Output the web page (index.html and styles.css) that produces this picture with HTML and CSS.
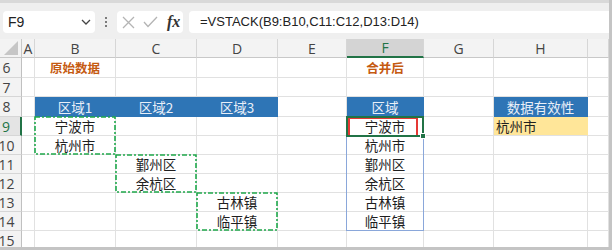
FILE: index.html
```html
<!DOCTYPE html>
<html lang="zh-CN">
<head>
  <meta charset="UTF-8">
  <title>VSTACK 合并区域</title>
  <link rel="stylesheet" href="styles.css">
</head>
<body>
  <div class="window">
    <div class="toolbar">
      <div class="name-box">
        <span>F9</span>
        <svg width="10" height="6" viewBox="0 0 10 6"><polyline points="1,1 5,5 9,1" fill="none" stroke="#444" stroke-width="1.3"/></svg>
      </div>
      <div class="dots"><i></i><i></i><i></i></div>
      <div class="fx-box">
        <svg width="13" height="13" viewBox="0 0 13 13"><path d="M1 1 L12 12 M12 1 L1 12" stroke="#b4b4b4" stroke-width="1.3"/></svg>
        <svg width="15" height="12" viewBox="0 0 15 12"><polyline points="1,6 5,10.5 14,1" fill="none" stroke="#b4b4b4" stroke-width="1.3"/></svg>
        <span class="fx">fx</span>
      </div>
      <div class="formula">=VSTACK(B9:B10,C11:C12,D13:D14)</div>
    </div>

    <div class="sheet">
      <div class="cells" id="cells"></div>
      <div class="marks">
        <div class="ants ants-b"><svg><rect x="1" y="1" width="100%" height="100%"/></svg></div>
        <div class="ants ants-c"><svg><rect x="1" y="1" width="100%" height="100%"/></svg></div>
        <div class="ants ants-d"><svg><rect x="1" y="1" width="100%" height="100%"/></svg></div>
        <div class="spill"></div>
        <div class="active"><span class="handle"></span></div>
        <div class="callout"></div>
      </div>
    </div>
  </div>

  <script>
    const cols = ['A', 'B', 'C', 'D', 'E', 'F', 'G', 'H', ''];
    const data = {
      B6: ['原始数据', 'title'], F6: ['合并后', 'title'],
      B8: ['区域1', 'head'], C8: ['区域2', 'head'], D8: ['区域3', 'head'],
      F8: ['区域', 'head'], H8: ['数据有效性', 'head'],
      B9: ['宁波市'], B10: ['杭州市'], C11: ['鄞州区'], C12: ['余杭区'],
      D13: ['古林镇'], D14: ['临平镇'],
      F9: ['宁波市'], F10: ['杭州市'], F11: ['鄞州区'], F12: ['余杭区'],
      F13: ['古林镇'], F14: ['临平镇'],
      H9: ['杭州市', 'pick']
    };

    let html = '<div class="corner"><svg width="16" height="15"><polygon points="15,0 15,14 1,14" fill="#c6c6c6"/></svg></div>';
    html += cols.map(c => `<div class="col ${c === 'F' ? 'on' : ''}">${c}</div>`).join('');

    for (let r = 6; r <= 15; r++) {
      html += `<div class="num ${r === 9 ? 'on' : ''}">${r}</div>`;
      html += cols.map(c => {
        const cell = data[c + r];
        if (!cell) return '<div class="cell"></div>';
        return `<div class="cell ${cell[1] || ''}">${cell[0]}</div>`;
      }).join('');
    }
    document.getElementById('cells').innerHTML = html;
  </script>
</body>
</html>
```

FILE: styles.css
```css
body {
  margin: 0;
  font-family: "Liberation Sans", Arial, sans-serif;
}
.window {
  width: 612px;
  height: 250px;
  box-sizing: border-box;
  border-right: 3px solid #c4c4c4;
  border-bottom: 3px solid #c4c4c4;
  background: #fff;
  overflow: hidden;
  display: flex;
  flex-direction: column;
}
.toolbar {
  height: 39px;
  flex: none;
  box-sizing: border-box;
  background: #efefef;
  border-top: 3px solid #d9d9d9;
  padding: 8px 0 0 3px;
  display: flex;
  align-items: flex-start;
}
.name-box, .fx-box, .formula {
  height: 22px;
  background: #fff;
  border-radius: 4px;
  box-sizing: border-box;
}
.name-box {
  width: 92px;
  display: flex;
  align-items: center;
  justify-content: space-between;
  padding: 0 4px 0 5px;
  font-size: 14px;
  color: #222;
}
.dots {
  width: 22px;
  height: 22px;
  display: flex;
  flex-direction: column;
  align-items: center;
  justify-content: center;
  gap: 2px;
}
.dots i {
  width: 2px;
  height: 2px;
  background: #555;
  border-radius: 1px;
}
.fx-box {
  width: 66px;
  display: flex;
  align-items: center;
  gap: 8px;
  padding-left: 5px;
}
.fx {
  font-family: "Liberation Serif", serif;
  font-style: italic;
  font-weight: bold;
  font-size: 16px;
  color: #333;
  margin-left: 1px;
}
.formula {
  flex: 1;
  margin-left: 6px;
  border-radius: 4px 0 0 4px;
  padding-left: 11px;
  font-size: 13px;
  line-height: 22px;
  color: #222;
}

.sheet {
  position: relative;
  flex: 1;
  overflow: hidden;
}
.cells, .marks {
  display: grid;
  grid-template-columns: 22px 13px 81px 81px 81px 69px 77px 70px 94px 21px;
  grid-template-rows: 19px 20px 19px 20px repeat(7, 19px);
}
.cells > div {
  box-sizing: border-box;
  border-right: 1px solid #e1e1e1;
  border-bottom: 1px solid #e1e1e1;
  display: flex;
  align-items: center;
  justify-content: center;
  white-space: nowrap;
}
.corner {
  background: #f3f3f3;
  align-items: flex-end !important;
  justify-content: flex-end !important;
  padding: 0 2px 1px 0;
  border-right-color: #c8c8c8 !important;
  border-bottom-color: #c8c8c8 !important;
}
.col {
  background: #f3f3f3;
  font-family: "Open Sans", sans-serif;
  font-size: 14px;
  color: #444;
  border-right-color: #d6d6d6 !important;
  border-bottom-color: #c8c8c8 !important;
}
.col.on {
  background: #d4d4d4;
  color: #217346;
  border-bottom: 2px solid #217346 !important;
}
.num {
  background: #f3f3f3;
  font-family: "Open Sans", sans-serif;
  font-size: 14px;
  color: #444;
  padding-right: 8px;
  border-right-color: #c0c0c0 !important;
  border-bottom-color: #d6d6d6 !important;
}
.num.on {
  background: #e4e4e4;
  color: #217346;
  border-right: 2px solid #217346 !important;
}
.cell {
  font-family: "Noto Sans CJK SC", sans-serif;
  font-size: 13.5px;
  color: #1f1f1f;
}
.cell.title {
  color: #c55a11;
  font-weight: bold;
  font-size: 12.5px;
}
.cell.head {
  background: #2e75b6;
  color: #e9eff8;
  border-color: #2e75b6;
}
.cell.pick {
  background: #ffe699;
  justify-content: flex-start;
  padding-left: 2px;
  border-right-color: #ffe699;
}

.marks {
  position: absolute;
  top: 0;
  left: 0;
  pointer-events: none;
}
.ants {
  margin: -1px 0 0 -1px;
}
.ants svg {
  display: block;
  width: 100%;
  height: 100%;
  overflow: visible;
}
.ants rect {
  width: calc(100% - 2px);
  height: calc(100% - 2px);
  fill: none;
  stroke: #1fa84b;
  stroke-width: 1.6;
  stroke-dasharray: 5 2 2 2;
}
.ants-b { grid-column: 3; grid-row: 5 / 7; }
.ants-c { grid-column: 4; grid-row: 7 / 9; }
.ants-d { grid-column: 5; grid-row: 9 / 11; }
.spill {
  grid-column: 7;
  grid-row: 5 / 11;
  margin: -1px 0 0 -1px;
  border: 1px solid #8aa7da;
}
.active {
  grid-column: 7;
  grid-row: 5;
  position: relative;
  margin: -1px 0 -1px -1px;
  border: 2px solid #217346;
}
.handle {
  position: absolute;
  right: -4px;
  bottom: -4px;
  width: 4px;
  height: 4px;
  background: #217346;
  border: 1px solid #fff;
}
.callout {
  grid-column: 7;
  grid-row: 5;
  margin: 0 6px -1px 1px;
  border: 2px solid #e53935;
}
```
